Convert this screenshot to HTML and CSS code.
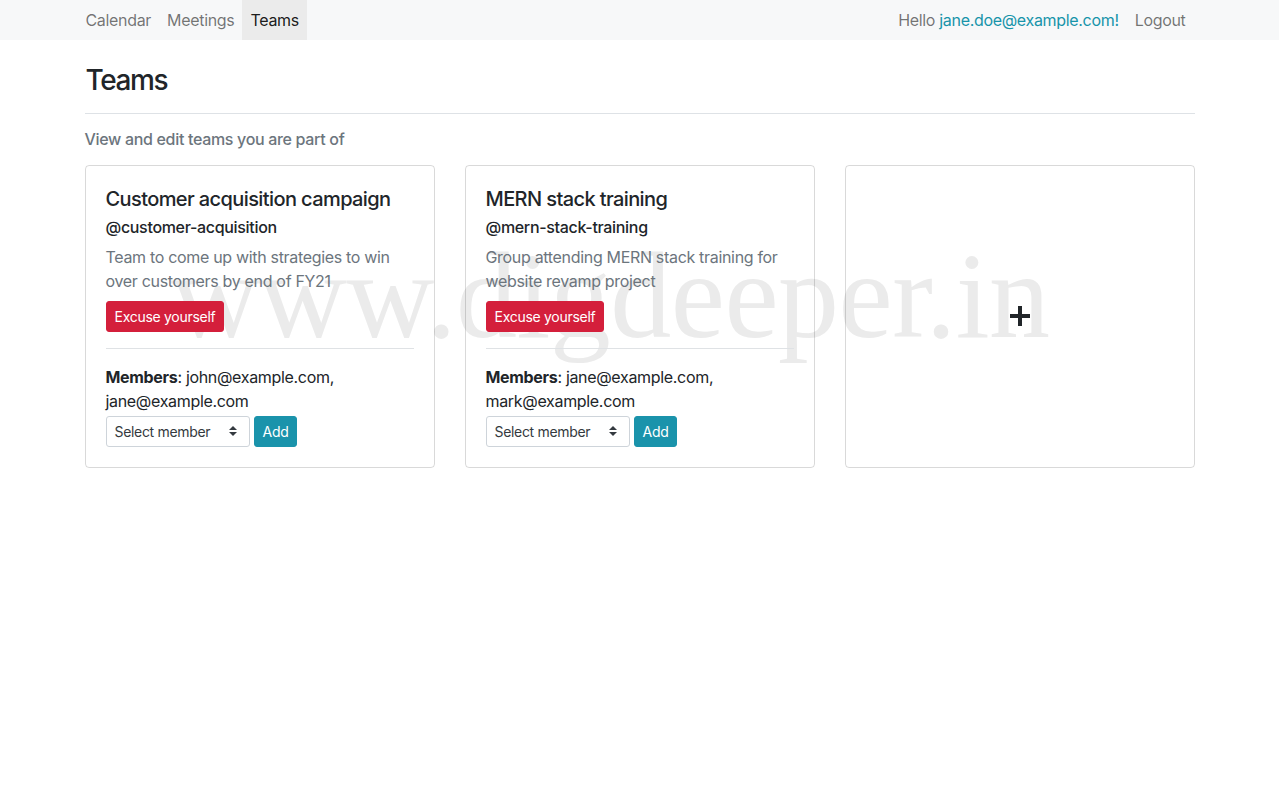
FILE: index.html
```html
<!DOCTYPE html>
<html lang="en">
<head>
<meta charset="utf-8">
<title>Teams</title>
<link rel="stylesheet" href="styles.css">
</head>
<body>
<div class="watermark">www.digdeeper.in</div>
<nav class="navbar">
  <div class="nav-inner">
    <ul class="nav-left">
      <li><a class="nav-link" href="#">Calendar</a></li>
      <li><a class="nav-link" href="#">Meetings</a></li>
      <li><a class="nav-link active" href="#">Teams</a></li>
    </ul>
    <ul class="nav-right">
      <li class="nav-text">Hello <a class="email" href="#">jane.doe@example.com!</a></li>
      <li><a class="nav-link" href="#">Logout</a></li>
    </ul>
  </div>
</nav>
<main class="container">
  <h3 class="page-title">Teams</h3>
  <hr class="page-rule">
  <h6 class="lead-text">View and edit teams you are part of</h6>
  <div class="cards">
    <div class="card">
      <div class="card-body">
        <h5 class="card-title">Customer acquisition campaign</h5>
        <h6 class="card-subtitle">@customer-acquisition</h6>
        <p class="card-text">Team to come up with strategies to win over customers by end of FY21</p>
        <button class="btn btn-danger">Excuse yourself</button>
        <hr class="card-rule">
        <p class="members"><strong>Members</strong>: john@example.com, jane@example.com</p>
        <div class="add-row">
          <div class="select">Select member
            <svg class="select-arrow" width="8" height="10" viewBox="0 0 8 10"><path d="M4 0 L8 4 H0 Z M0 6 H8 L4 10 Z" fill="#343a40"/></svg>
          </div>
          <button class="btn btn-info">Add</button>
        </div>
      </div>
    </div>
    <div class="card">
      <div class="card-body">
        <h5 class="card-title">MERN stack training</h5>
        <h6 class="card-subtitle">@mern-stack-training</h6>
        <p class="card-text">Group attending MERN stack training for website revamp project</p>
        <button class="btn btn-danger">Excuse yourself</button>
        <hr class="card-rule">
        <p class="members"><strong>Members</strong>: jane@example.com, mark@example.com</p>
        <div class="add-row">
          <div class="select">Select member
            <svg class="select-arrow" width="8" height="10" viewBox="0 0 8 10"><path d="M4 0 L8 4 H0 Z M0 6 H8 L4 10 Z" fill="#343a40"/></svg>
          </div>
          <button class="btn btn-info">Add</button>
        </div>
      </div>
    </div>
    <div class="card card-add">
      <svg width="20" height="20" viewBox="0 0 20 20"><rect x="8" y="0" width="4" height="20" fill="#212529"/><rect x="0" y="8" width="20" height="4" fill="#212529"/></svg>
    </div>
  </div>
</main>
</body>
</html>
```
FILE: styles.css
```css
* { box-sizing: border-box; }
html, body { margin: 0; padding: 0; }
body {
  font-family: Inter, "Liberation Sans", sans-serif;
  font-size: 16px;
  line-height: 1.5;
  letter-spacing: -0.02em;
  color: #212529;
  background: #fff;
  position: relative;
  min-height: 799px;
}
.watermark {
  position: absolute;
  z-index: -1;
  left: 171px;
  top: 235px;
  font-family: "Liberation Serif", serif;
  font-size: 122px;
  line-height: 1;
  color: #ebebeb;
  white-space: nowrap;
  letter-spacing: -0.5px;
}
.navbar {
  background: #f7f8f9;
  height: 40px;
}
.nav-inner {
  width: 1140px;
  margin: 0 auto;
  padding: 0 16px 0 8px;
  display: flex;
  justify-content: space-between;
  height: 40px;
}
.nav-left, .nav-right {
  list-style: none;
  margin: 0;
  padding: 0;
  display: flex;
  height: 40px;
}
.nav-link {
  display: block;
  padding: 8px;
  color: rgba(0,0,0,.55);
  text-decoration: none;
  line-height: 24px;
}
.nav-link.active {
  color: rgba(0,0,0,.9);
  background: #ebebeb;
}
.nav-text {
  padding: 8px;
  color: rgba(0,0,0,.55);
  line-height: 24px;
}
.email { color: #1794aa; text-decoration: none; }
.container {
  width: 1110px;
  margin: 0 auto;
}
.page-title {
  font-size: 28px;
  font-weight: 500;
  line-height: 1.2;
  margin: 24px 0 0 1px;
  letter-spacing: -0.05em;
}
.page-rule {
  margin: 15px 0 0;
  border: 0;
  border-top: 1px solid #dee2e6;
}
.lead-text {
  font-size: 16px;
  font-weight: 500;
  color: #6c757d;
  margin: 16px 0 0;
  line-height: 19px;
}
.cards {
  display: grid;
  grid-template-columns: repeat(3, 1fr);
  gap: 30px;
  margin-top: 16px;
}
.card {
  border: 1px solid rgba(0,0,0,.15);
  border-radius: 4px;
  background: transparent;
}
.card-body { padding: 21px 20px 20px; }
.card-title {
  font-size: 20px;
  font-weight: 500;
  line-height: 24px;
  margin: 0 0 6px;
  letter-spacing: -0.03em;
}
.card-subtitle {
  font-size: 16px;
  font-weight: 500;
  line-height: 20px;
  margin: 0 0 8px;
}
.card-text {
  color: #6c757d;
  margin: 0 0 8px;
}
.btn {
  font-family: inherit;
  font-size: 14px;
  letter-spacing: -0.02em;
  line-height: 21px;
  padding: 4px 8px;
  border: 1px solid transparent;
  border-radius: 3px;
  color: #fff;
  cursor: pointer;
}
.btn-danger { background: #d41f3b; border-color: #d41f3b; }
.btn-info { background: #1a93ab; border-color: #1a93ab; }
.card-rule {
  margin: 16px 0;
  border: 0;
  border-top: 1px solid #dfe2e5;
}
.members { margin: 0 0 3px; }
.add-row {
  display: flex;
  gap: 4px;
}
.select {
  width: 144px;
  height: 31px;
  border: 1px solid #ced4da;
  border-radius: 3px;
  font-size: 14px;
  line-height: 29px;
  padding: 0 12px 0 8px;
  color: #343a40;
  display: flex;
  justify-content: space-between;
  align-items: center;
}
.card-add {
  display: flex;
  align-items: center;
  justify-content: center;
}
```
